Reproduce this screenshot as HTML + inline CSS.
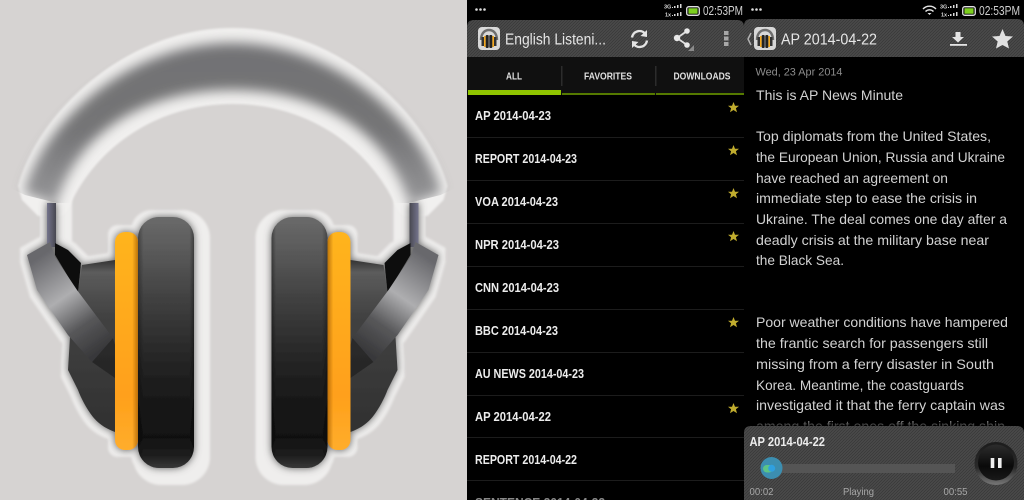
<!DOCTYPE html>
<html><head><meta charset="utf-8"><title>English Listening</title>
<style>
html,body{margin:0;padding:0;background:#d6d3d2}
svg{display:block}
text{font-family:"Liberation Sans",sans-serif}
.b{font-size:14px;fill:#d2d2d2}
.l{font-size:12.500px;font-weight:bold;fill:#ececec}
.t{font-size:10px;font-weight:bold;fill:#e0e0e0}
.s{font-size:12.500px;fill:#d0d0d0}
.n{font-size:5.500px;font-weight:bold;fill:#d8d8d8}
.soft{filter:blur(.3px)}
</style></head><body>
<svg width="1024" height="500" viewBox="0 0 1024 500" xmlns="http://www.w3.org/2000/svg">
<defs>
<pattern id="cb" width="3" height="3" patternUnits="userSpaceOnUse">
<rect width="3" height="3" fill="#4c4c4c"/><path d="M0,3L3,0M-1,1L1,-1M2,4L4,2" stroke="#3a3a3a" stroke-width="1"/>
</pattern>
<filter id="halo" filterUnits="userSpaceOnUse" x="0" y="0" width="467" height="500">
<feMorphology in="SourceAlpha" operator="dilate" radius="7" result="d"/>
<feGaussianBlur in="d" stdDeviation="1.200" result="db"/>
<feFlood flood-color="#efeeed"/><feComposite in2="db" operator="in"/>
</filter>
<filter id="shade" filterUnits="userSpaceOnUse" x="0" y="0" width="467" height="500">
<feGaussianBlur in="SourceAlpha" stdDeviation="4" result="sb"/>
<feFlood flood-color="#5a5a5a"/><feComposite in2="sb" operator="in" result="sh"/>
<feMerge><feMergeNode in="sh"/><feMergeNode in="SourceGraphic"/></feMerge>
</filter>
<filter id="bl6" filterUnits="userSpaceOnUse" x="0" y="0" width="467" height="300"><feGaussianBlur stdDeviation="6"/></filter>
<filter id="bl1" filterUnits="userSpaceOnUse" x="0" y="0" width="467" height="300"><feGaussianBlur stdDeviation="1"/></filter>
<linearGradient id="pad" x1="0" y1="0" x2="0" y2="1">
<stop offset="0" stop-color="#6a6a6a"/><stop offset=".15" stop-color="#585858"/><stop offset=".3" stop-color="#444"/><stop offset=".45" stop-color="#323232"/><stop offset=".6" stop-color="#222"/><stop offset=".75" stop-color="#171717"/><stop offset=".88" stop-color="#111"/><stop offset=".95" stop-color="#1e1e1e"/><stop offset="1" stop-color="#383838"/>
</linearGradient>
<linearGradient id="padx" x1="0" y1="0" x2="1" y2="0">
<stop offset="0" stop-color="#000" stop-opacity=".3"/><stop offset=".1" stop-color="#000" stop-opacity="0"/><stop offset=".92" stop-color="#000" stop-opacity="0"/><stop offset="1" stop-color="#000" stop-opacity=".35"/>
</linearGradient>
<linearGradient id="org" x1="0" y1="0" x2="0" y2="1">
<stop offset="0" stop-color="#ffb41f"/><stop offset=".75" stop-color="#ffa01a"/><stop offset="1" stop-color="#ffad2c"/>
</linearGradient>
<linearGradient id="orgx" x1="0" y1="0" x2="1" y2="0">
<stop offset=".75" stop-color="#a05a00" stop-opacity="0"/><stop offset="1" stop-color="#a05a00" stop-opacity=".7"/>
</linearGradient>
<linearGradient id="arm" gradientUnits="userSpaceOnUse" x1="38" y1="258" x2="102" y2="350">
<stop offset="0" stop-color="#68686c"/><stop offset=".42" stop-color="#aeaeb0"/><stop offset=".72" stop-color="#58585a"/><stop offset="1" stop-color="#38383a"/>
</linearGradient>
<linearGradient id="cup" x1="0" y1="0" x2="0" y2="1">
<stop offset="0" stop-color="#333"/><stop offset=".07" stop-color="#5c5c5c"/><stop offset=".32" stop-color="#424242"/><stop offset="1" stop-color="#303030"/>
</linearGradient>
<linearGradient id="stem" x1="0" y1="0" x2="1" y2="0">
<stop offset="0" stop-color="#74748c"/><stop offset="1" stop-color="#484850"/>
</linearGradient>
<linearGradient id="fade" x1="0" y1="0" x2="0" y2="1">
<stop offset="0" stop-color="#000" stop-opacity="0"/><stop offset="1" stop-color="#000" stop-opacity=".85"/>
</linearGradient>
<linearGradient id="ring" x1="0" y1="0" x2="0" y2="1">
<stop offset="0" stop-color="#1c1c1c"/><stop offset=".6" stop-color="#2a2a2a"/><stop offset="1" stop-color="#777"/>
</linearGradient>
<linearGradient id="btn" x1="0" y1="0" x2="0" y2="1">
<stop offset="0" stop-color="#2c2c2c"/><stop offset=".6" stop-color="#0a0a0a"/><stop offset="1" stop-color="#1a1a1a"/>
</linearGradient>
<linearGradient id="bandc" gradientUnits="userSpaceOnUse" x1="0" y1="45" x2="0" y2="200">
<stop offset="0" stop-color="#727274"/><stop offset=".55" stop-color="#747476"/><stop offset="1" stop-color="#959597"/>
</linearGradient>
<clipPath id="bandclip"><path d="M0,0H466V183L440.500,195L408.500,203H57L25,195L0,183Z"/></clipPath>

<g id="half">
<rect x="47" y="203" width="9" height="44" fill="url(#stem)"/>
<polygon points="55,243 68,250 81,263 78,293 55,255" fill="#111"/>
<path d="M82,265L115,260V432C104,428 97,422 93,417C86,408 81,398 78,390L68,370L70,337L78,293Z" fill="url(#cup)"/>
<polygon points="113,338 92,362 115,378 115,345" fill="#111" opacity=".45"/>
<polygon points="27,255 50,242 55,257 77,290 113,338 92,362 68,335 37,290" fill="url(#arm)"/>
<rect x="115" y="232" width="23" height="218" rx="10" fill="url(#org)"/>
<rect x="115" y="232" width="23" height="218" rx="10" fill="url(#orgx)"/>
<rect x="138" y="217" width="56" height="251" rx="21" fill="url(#pad)"/>
<rect x="138" y="217" width="56" height="251" rx="21" fill="url(#padx)"/>
</g>
<g id="extra">
<rect x="140" y="217" width="63" height="261" rx="28"/>
<rect x="47" y="200" width="18" height="50"/>
</g>
<g id="mini">
<path d="M3,13C3,6 7,3 11,3S19,6 19,13" fill="none" stroke="#6e6e6e" stroke-width="2.400"/>
<rect x="3.500" y="10" width="2.500" height="9" fill="#333"/><rect x="16" y="10" width="2.500" height="9" fill="#333"/>
<rect x="6" y="9" width="1.700" height="11" fill="#f5a81c"/><rect x="14.300" y="9" width="1.700" height="11" fill="#f5a81c"/>
<rect x="7.700" y="8" width="3" height="13" rx="1" fill="#222"/><rect x="11.300" y="8" width="3" height="13" rx="1" fill="#222"/>
</g>
<g id="star"><polygon points="0,-5.500 1.500,-1.800 5.500,-1.700 2.400,.8 3.500,4.700 0,2.500 -3.500,4.700 -2.400,.8 -5.500,-1.700 -1.500,-1.800" fill="#c0ac2e"/></g>
<g id="sig" fill="#d8d8d8">
<text class="n" x="1" y="6.500">3G</text><rect x="9" y="5" width="1" height="1"/><rect x="11" y="4" width="1.500" height="2"/><rect x="14" y="3" width="1.500" height="3"/><rect x="17" y="2" width="1.500" height="4"/>
<text class="n" x="2" y="14.500">1x</text><rect x="9" y="13" width="1" height="1"/><rect x="11" y="12" width="1.500" height="2"/><rect x="14" y="11" width="1.500" height="3"/><rect x="17" y="10" width="1.500" height="4"/>
</g>
<g id="bat"><rect x=".7" y=".7" width="12.600" height="8.600" rx="2" fill="#111" stroke="#e0e0e0" stroke-width="1.300"/><rect x="2.500" y="2.300" width="9" height="5.400" fill="#7ccf1e"/></g>
</defs>

<rect width="467" height="500" fill="#d6d3d2"/>

<!-- headphones: halo -->
<g filter="url(#halo)">
<use href="#half"/><use href="#half" transform="translate(465.500,0) scale(-1,1)"/>
<use href="#extra"/><use href="#extra" transform="translate(465.500,0) scale(-1,1)"/>
</g>
<path d="M18,186C35,120 120,28 232.700,28C345,28 430,120 447.500,186L443.500,200L427.500,216H403.500L397.500,210C375,155 315,104 232.700,104C150,104 90,155 68,210L62,216H38L22,200Z" fill="#f1f0ef" filter="url(#bl1)"/>
<!-- headphones: object -->
<g filter="url(#shade)">
<use href="#half"/><use href="#half" transform="translate(465.500,0) scale(-1,1)"/>
</g>
<g clip-path="url(#bandclip)">
<path d="M24,193C41,127 125,43 232.700,43C340,43 424,127 441.500,193L409.500,205C387,128 315,90 232.700,90C150,90 78,128 56,205Z" fill="url(#bandc)" filter="url(#bl6)"/>
</g>

<g class="soft">
<!-- left phone -->
<rect x="467" y="0" width="277" height="500" fill="#000"/>
<circle cx="476.500" cy="9.500" r="1.300" fill="#ddd"/><circle cx="480.500" cy="9.500" r="1.300" fill="#ddd"/><circle cx="484.500" cy="9.500" r="1.300" fill="#ddd"/>
<use href="#sig" x="663" y="2"/>
<use href="#bat" x="686" y="6"/>
<text class="s" x="703" y="15" textLength="40" lengthAdjust="spacingAndGlyphs">02:53PM</text>
<path d="M467,57V27Q467,20 474,20H737Q744,20 744,27V57Z" fill="url(#cb)"/>
<rect x="478" y="27" width="22" height="23" rx="4" fill="#d8d8d8"/>
<use href="#mini" x="478" y="27"/>
<text x="505" y="44.500" font-size="16" fill="#e6e6e6" textLength="101" lengthAdjust="spacingAndGlyphs">English Listeni...</text>
<!-- sync -->
<g fill="none" stroke="#e4e4e4" stroke-width="2.400">
<path d="M632,37.500A7.500,7.500 0 0 1 645,33.500"/>
<path d="M647,40.500A7.500,7.500 0 0 1 634,44.500"/>
</g>
<polygon points="647,30 647,37 640.500,36" fill="#e4e4e4"/>
<polygon points="632,48 632,41 638.500,42" fill="#e4e4e4"/>
<!-- share -->
<path d="M687,31L677,38L687,45" fill="none" stroke="#e0e0e0" stroke-width="1.800"/>
<circle cx="687" cy="31" r="2.800" fill="#e8e8e8"/><circle cx="677" cy="38" r="3.200" fill="#e8e8e8"/><circle cx="687" cy="45" r="2.800" fill="#e8e8e8"/>
<polygon points="694,45 694,51 688,51" fill="#8a8a8a"/>
<!-- overflow -->
<rect x="724" y="31" width="4.500" height="4" fill="#a8a8a8"/><rect x="724" y="36.500" width="4.500" height="4" fill="#a8a8a8"/><rect x="724" y="42" width="4.500" height="4" fill="#a8a8a8"/>
<!-- tabs -->
<rect x="467" y="57" width="277" height="38" fill="#101010"/>
<rect x="561" y="66" width="1.500" height="20" fill="#2c2c2c"/><rect x="655" y="66" width="1.500" height="20" fill="#2c2c2c"/>
<text class="t" x="506" y="79.500" textLength="16" lengthAdjust="spacingAndGlyphs">ALL</text>
<text class="t" x="584" y="79.500" textLength="48" lengthAdjust="spacingAndGlyphs">FAVORITES</text>
<text class="t" x="673.500" y="79.500" textLength="57" lengthAdjust="spacingAndGlyphs">DOWNLOADS</text>
<rect x="468" y="90" width="93" height="5" fill="#8fc400"/>
<rect x="562" y="93" width="93" height="2" fill="#557a00"/><rect x="656" y="93" width="88" height="2" fill="#557a00"/>
<!-- list -->
<g fill="#1c1c1c">
<rect x="467" y="137" width="277" height="1"/><rect x="467" y="180" width="277" height="1"/><rect x="467" y="223" width="277" height="1"/><rect x="467" y="266" width="277" height="1"/><rect x="467" y="309" width="277" height="1"/><rect x="467" y="352" width="277" height="1"/><rect x="467" y="395" width="277" height="1"/><rect x="467" y="437" width="277" height="1"/><rect x="467" y="480" width="277" height="1"/>
</g>
<text class="l" x="475" y="120" textLength="76" lengthAdjust="spacingAndGlyphs">AP 2014-04-23</text>
<text class="l" x="475" y="163" textLength="102" lengthAdjust="spacingAndGlyphs">REPORT 2014-04-23</text>
<text class="l" x="475" y="206" textLength="83" lengthAdjust="spacingAndGlyphs">VOA 2014-04-23</text>
<text class="l" x="475" y="249" textLength="84" lengthAdjust="spacingAndGlyphs">NPR 2014-04-23</text>
<text class="l" x="475" y="292" textLength="84" lengthAdjust="spacingAndGlyphs">CNN 2014-04-23</text>
<text class="l" x="475" y="335" textLength="83" lengthAdjust="spacingAndGlyphs">BBC 2014-04-23</text>
<text class="l" x="475" y="378" textLength="109" lengthAdjust="spacingAndGlyphs">AU NEWS 2014-04-23</text>
<text class="l" x="475" y="421" textLength="76" lengthAdjust="spacingAndGlyphs">AP 2014-04-22</text>
<text class="l" x="475" y="464" textLength="102" lengthAdjust="spacingAndGlyphs">REPORT 2014-04-22</text>
<text class="l" x="475" y="507" textLength="130" lengthAdjust="spacingAndGlyphs" style="fill:#888">SENTENCE 2014-04-22</text>
<use href="#star" x="733.500" y="107.500"/><use href="#star" x="733.500" y="150.500"/><use href="#star" x="733.500" y="193.500"/><use href="#star" x="733.500" y="236.500"/><use href="#star" x="733.500" y="322.500"/><use href="#star" x="733.500" y="408.500"/>

<!-- right phone -->
<rect x="744" y="0" width="280" height="500" fill="#000"/>
<circle cx="752.500" cy="9.500" r="1.300" fill="#ddd"/><circle cx="756.500" cy="9.500" r="1.300" fill="#ddd"/><circle cx="760.500" cy="9.500" r="1.300" fill="#ddd"/>
<g fill="none" stroke="#e4e4e4" stroke-width="1.400">
<path d="M923,9A9,9 0 0 1 936,9"/><path d="M925.500,11.500A5.500,5.500 0 0 1 933.500,11.500"/>
</g>
<polygon points="929.500,15 927.500,13 931.500,13" fill="#e4e4e4"/>
<use href="#sig" x="939" y="2"/>
<use href="#bat" x="962" y="6"/>
<text class="s" x="979" y="15" textLength="41" lengthAdjust="spacingAndGlyphs">02:53PM</text>
<path d="M744,57V26Q744,19 751,19H1017Q1024,19 1024,26V57Z" fill="url(#cb)"/>
<path d="M751,33L748,39L751,45" fill="none" stroke="#b0b0b0" stroke-width="1.500"/>
<rect x="754" y="27" width="22" height="23" rx="4" fill="#d8d8d8"/>
<use href="#mini" x="754" y="27"/>
<text x="781" y="44.500" font-size="16" fill="#e6e6e6" textLength="96" lengthAdjust="spacingAndGlyphs">AP 2014-04-22</text>
<!-- download -->
<polygon points="955.500,32 960.500,32 960.500,37 964,37 958,42.500 952,37 955.500,37" fill="#e4e4e4"/>
<rect x="950" y="44" width="17" height="1.800" fill="#e4e4e4"/>
<!-- star large -->
<polygon points="1002.500,29 1005.500,36 1013,36.500 1007.300,41.500 1009,48.500 1002.500,45 996,48.500 997.700,41.500 992,36.500 999.500,36" fill="#e0e0e0"/>
<text x="755.500" y="75.500" font-size="11" fill="#8c8c8c" textLength="87" lengthAdjust="spacingAndGlyphs">Wed, 23 Apr 2014</text>
<text class="b" x="756" y="100" textLength="147" lengthAdjust="spacingAndGlyphs">This is AP News Minute</text>
<text class="b" x="756" y="141" textLength="235" lengthAdjust="spacingAndGlyphs">Top diplomats from the United States,</text>
<text class="b" x="756" y="162" textLength="249" lengthAdjust="spacingAndGlyphs">the European Union, Russia and Ukraine</text>
<text class="b" x="756" y="183" textLength="192" lengthAdjust="spacingAndGlyphs">have reached an agreement on</text>
<text class="b" x="756" y="203" textLength="221" lengthAdjust="spacingAndGlyphs">immediate step to ease the crisis in</text>
<text class="b" x="756" y="224" textLength="251" lengthAdjust="spacingAndGlyphs">Ukraine. The deal comes one day after a</text>
<text class="b" x="756" y="245" textLength="233" lengthAdjust="spacingAndGlyphs">deadly crisis at the military base near</text>
<text class="b" x="756" y="265" textLength="88" lengthAdjust="spacingAndGlyphs">the Black Sea.</text>
<text class="b" x="756" y="327" textLength="252" lengthAdjust="spacingAndGlyphs">Poor weather conditions have hampered</text>
<text class="b" x="756" y="348" textLength="232" lengthAdjust="spacingAndGlyphs">the frantic search for passengers still</text>
<text class="b" x="756" y="369" textLength="238" lengthAdjust="spacingAndGlyphs">missing from a ferry disaster in South</text>
<text class="b" x="756" y="390" textLength="208" lengthAdjust="spacingAndGlyphs">Korea. Meantime, the coastguards</text>
<text class="b" x="756" y="410" textLength="249" lengthAdjust="spacingAndGlyphs">investigated it that the ferry captain was</text>
<text class="b" x="756" y="431" textLength="249" lengthAdjust="spacingAndGlyphs">among the first ones off the sinking ship</text>
<rect x="744" y="416" width="280" height="11" fill="url(#fade)"/>
<!-- player -->
<path d="M744,500V433Q744,426 751,426H1017Q1024,426 1024,433V500Z" fill="url(#cb)"/>
<text class="l" x="749.500" y="446" textLength="75.500" lengthAdjust="spacingAndGlyphs">AP 2014-04-22</text>
<rect x="771" y="464" width="184" height="9" fill="#555"/>
<circle cx="771.500" cy="468" r="11" fill="#3c8eb0"/>
<rect x="763" y="465" width="10" height="7.500" rx="3.700" fill="#5cc486"/>
<circle cx="771.700" cy="468.300" r="3.500" fill="#2fa0e0"/>
<text x="749.500" y="495" font-size="10.500" fill="#a8a8a8" textLength="24" lengthAdjust="spacingAndGlyphs">00:02</text>
<text x="843" y="495" font-size="10.500" fill="#a8a8a8" textLength="31" lengthAdjust="spacingAndGlyphs">Playing</text>
<text x="943.500" y="495" font-size="10.500" fill="#a8a8a8" textLength="24" lengthAdjust="spacingAndGlyphs">00:55</text>
<circle cx="996" cy="463.500" r="21.500" fill="url(#ring)"/>
<circle cx="996" cy="462.500" r="18" fill="url(#btn)"/>
<rect x="990.700" y="458" width="3.600" height="10" fill="#eee"/><rect x="998" y="458" width="3.600" height="10" fill="#eee"/>
</g>
</svg>
</body></html>
